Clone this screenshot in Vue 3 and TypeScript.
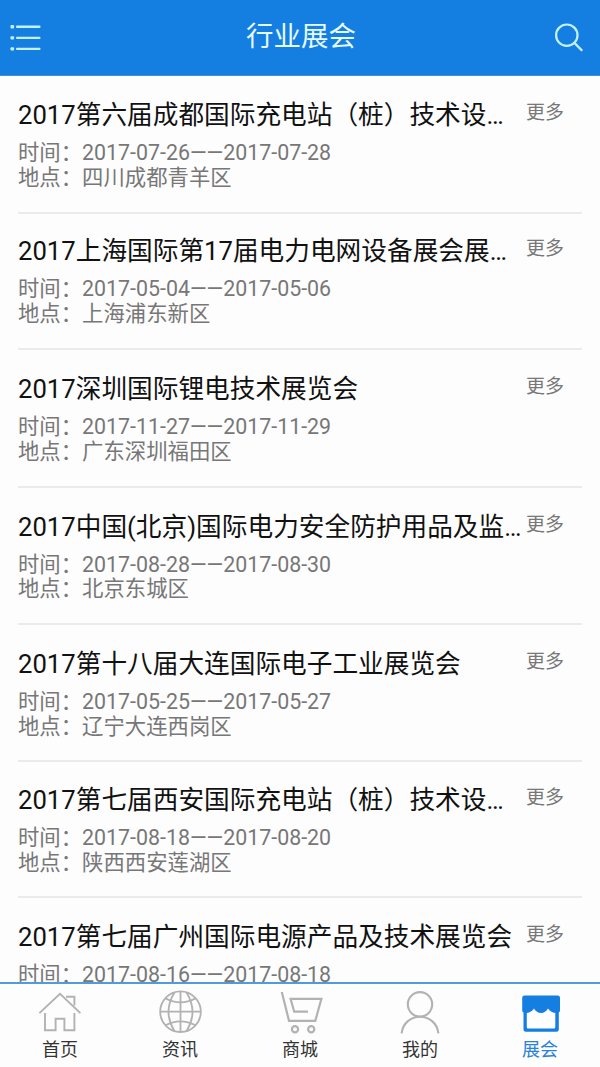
<script setup lang="ts">
interface Expo {
  title: string
  date: string
  place: string
}

const expos: Expo[] = [
  { title: '2017第六届成都国际充电站（桩）技术设…', date: '2017-07-26——2017-07-28', place: '四川成都青羊区' },
  { title: '2017上海国际第17届电力电网设备展会展…', date: '2017-05-04——2017-05-06', place: '上海浦东新区' },
  { title: '2017深圳国际锂电技术展览会', date: '2017-11-27——2017-11-29', place: '广东深圳福田区' },
  { title: '2017中国(北京)国际电力安全防护用品及监…', date: '2017-08-28——2017-08-30', place: '北京东城区' },
  { title: '2017第十八届大连国际电子工业展览会', date: '2017-05-25——2017-05-27', place: '辽宁大连西岗区' },
  { title: '2017第七届西安国际充电站（桩）技术设…', date: '2017-08-18——2017-08-20', place: '陕西西安莲湖区' },
  { title: '2017第七届广州国际电源产品及技术展览会', date: '2017-08-16——2017-08-18', place: '' },
]
</script>

<template>
  <div class="app">
    <header class="bar">
      <svg class="menu" width="32" height="28" viewBox="0 0 32 28">
        <g fill="#c4f1ff">
          <rect x="0.5" y="1" width="3.6" height="3.4" rx="1" />
          <rect x="0.5" y="12.2" width="3.6" height="3.4" rx="1" />
          <rect x="0.5" y="23.2" width="3.6" height="3.4" rx="1" />
          <rect x="6" y="1.5" width="24.5" height="2.4" rx="1" />
          <rect x="6" y="12.7" width="24.5" height="2.4" rx="1" />
          <rect x="6" y="23.7" width="24.5" height="2.4" rx="1" />
        </g>
      </svg>
      <h1>行业展会</h1>
      <svg class="search" width="30" height="30" viewBox="0 0 30 30" fill="none" stroke="#c4f1ff" stroke-width="2.2" stroke-linecap="round">
        <circle cx="12.8" cy="12.2" r="10.7" />
        <path d="M20.4 19.9 L27.6 27.1" />
      </svg>
    </header>

    <main class="list">
      <article v-for="expo in expos" :key="expo.title" class="item">
        <div class="head">
          <h2>{{ expo.title }}</h2>
          <a class="more">更多</a>
        </div>
        <p>时间：{{ expo.date }}</p>
        <p v-if="expo.place">地点：{{ expo.place }}</p>
      </article>
    </main>

    <nav class="tabs">
      <a class="tab">
        <svg width="44" height="44" viewBox="0 0 44 44" fill="none" stroke="#b2b2b2" stroke-width="1.9">
          <path d="M1.4 22.1 L22 2.9 L42.4 22.1" />
          <path d="M28 5.7 H36.4 V14.5" />
          <path d="M7 22 V39.3 H17.6 V27.8 H26.4 V39.3 H36.4 V22" />
        </svg>
        <span>首页</span>
      </a>
      <a class="tab">
        <svg width="44" height="44" viewBox="0 0 44 44" fill="none" stroke="#b2b2b2" stroke-width="1.8">
          <circle cx="22.5" cy="20.7" r="20.3" />
          <path d="M22.5 0.4 V41 M2.2 20.7 H42.8" />
          <path d="M16.5 1.4 Q4.5 20.7 16.5 40.2 M28.5 1.4 Q40.5 20.7 28.5 40.2" />
          <path d="M7.5 7.4 Q22.5 15.4 37.5 7.4 M7.5 34.2 Q22.5 26.4 37.5 34.2" />
        </svg>
        <span>资讯</span>
      </a>
      <a class="tab">
        <svg width="44" height="44" viewBox="0 0 44 44" fill="none" stroke="#b2b2b2" stroke-width="2.2">
          <path d="M3.8 1 L11 29.8 H37.3 L43.4 7.8 H12.6 L16.2 20.7 H30" />
          <circle cx="17" cy="38.3" r="3.1" />
          <circle cx="33.2" cy="38.3" r="3.1" />
        </svg>
        <span>商城</span>
      </a>
      <a class="tab">
        <svg width="44" height="44" viewBox="0 0 44 44" fill="none" stroke="#b2b2b2" stroke-width="2.1">
          <circle cx="22" cy="13.3" r="12.2" />
          <path d="M3.6 42.3 C6.5 20.3 37.5 20.3 40.4 42.3" />
        </svg>
        <span>我的</span>
      </a>
      <a class="tab active">
        <svg width="44" height="44" viewBox="0 0 44 44">
          <path fill="#147fe1" d="M6.6 4.4 H39.6 Q42 4.4 42 6.8 V19.2 Q42 20.9 40.8 21.6 V38.4 Q40.8 40.8 38.4 40.8 H8 Q5.5 40.8 5.5 38.4 V21.6 Q4.2 20.9 4.2 19.2 V6.8 Q4.2 4.4 6.6 4.4 Z" />
          <path fill="#fff" d="M8.8 22 Q13.5 21.5 16 17.6 Q18.5 22 23 22 Q27.5 22 30 17.6 Q32.5 21.5 37.3 22 V36.2 Q37.3 37.4 36.1 37.4 H10 Q8.8 37.4 8.8 36.2 Z" />
        </svg>
        <span>展会</span>
      </a>
    </nav>
  </div>
</template>

<style>
body {
  margin: 0;
  background: #fdfdfd;
}
</style>

<style scoped>
.app {
  display: flex;
  flex-direction: column;
  width: 600px;
  height: 1067px;
  overflow: hidden;
  background: #fdfdfd;
  font-family: Roboto, 'Noto Sans CJK SC', sans-serif;
}

.bar {
  display: flex;
  align-items: center;
  justify-content: space-between;
  flex: none;
  box-sizing: border-box;
  height: 76px;
  padding: 0 16px 0 10px;
  background: #147fe1;
  border-bottom: 1px solid #3f8edb;
}

h1 {
  margin: 0 0 1px 6px;
  color: #e6faff;
  font-size: 27.5px;
  font-weight: 400;
  line-height: 40px;
}

.list {
  flex: 1;
  min-height: 0;
  padding: 1px 18px 0;
  overflow: hidden;
}

.item {
  box-sizing: border-box;
  height: 137px;
  padding-top: 20px;
  border-bottom: 2px solid #ebebeb;
}

.item:nth-child(1),
.item:nth-child(6) {
  padding-top: 19px;
}

.item:nth-child(2) {
  padding-top: 18px;
}

.item:nth-child(2),
.item:nth-child(6) {
  height: 136px;
}

.item:nth-child(3) {
  height: 137.5px;
}

.item:nth-child(4) {
  height: 137.5px;
}

.head {
  display: flex;
  justify-content: space-between;
  height: 45px;
  padding-right: 18px;
}

h2 {
  margin: 0;
  color: #111;
  font-size: 25.68px;
  font-weight: 400;
  line-height: 38px;
  white-space: nowrap;
}

.more {
  color: #777;
  font-size: 19px;
  line-height: 34px;
  white-space: nowrap;
}

p {
  margin: 0;
  color: #777;
  font-size: 21.36px;
  line-height: 24.5px;
  white-space: nowrap;
}

.tabs {
  display: flex;
  flex: none;
  box-sizing: border-box;
  height: 85px;
  padding-top: 7px;
  border-top: 2px solid #4f9bdb;
  background: #fdfdfd;
}

.tab {
  display: flex;
  flex: 1;
  flex-direction: column;
  align-items: center;
  color: #333;
  font-size: 18px;
  line-height: 29px;
}

.tab svg {
  overflow: visible;
}

.active {
  color: #2a82d2;
}
</style>
